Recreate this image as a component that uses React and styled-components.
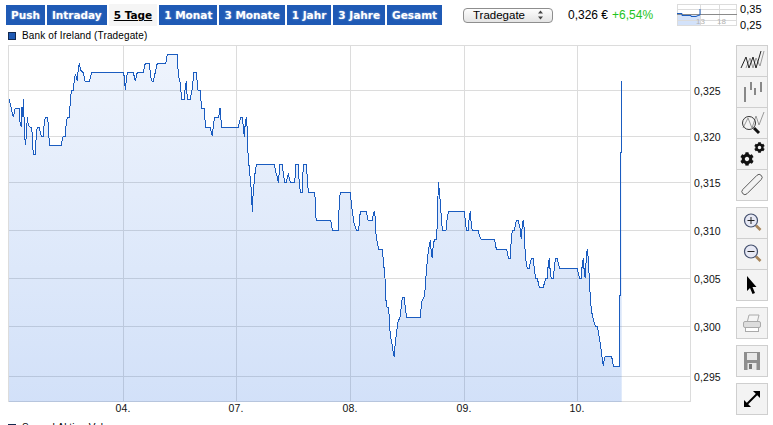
import styled, { createGlobalStyle } from "styled-components";
import { FaCog } from "react-icons/fa";

const GlobalStyle = createGlobalStyle`
  html, body {
    margin: 0;
    padding: 0;
    background: #fff;
    overflow: hidden;
  }
`;

const ranges = ["Push", "Intraday", "5 Tage", "1 Monat", "3 Monate", "1 Jahr", "3 Jahre", "Gesamt"];

const yGrid = [
  [90, "0,325"],
  [136, "0,320"],
  [182, "0,315"],
  [230, "0,310"],
  [278, "0,305"],
  [326, "0,300"],
  [376, "0,295"],
];

const xGrid = [
  [123, "04."],
  [236, "07."],
  [350, "08."],
  [464, "09."],
  [577, "10."],
];

// kurs trace, read off in 3x crops: [origin x, origin y, x y x y ...]
const traceParts = [
  [0, 40, [27,178, 33,200, 36,215, 40,232, 45,206, 58,206, 60,245, 64,262, 66,200, 68,230, 70,178, 74,280, 76,316, 79,290, 82,232, 85,255, 90,262, 94,262, 97,283, 98,323, 101,343, 106,343, 109,283, 112,262, 118,262, 122,283, 124,289, 130,289, 133,247, 136,232, 142,232, 145,253, 147,295, 149,316, 184,316, 187,298, 190,289, 196,289, 199,247, 202,232, 208,232, 209,212, 212,172, 214,151, 220,151, 224,110, 227,105, 232,124, 235,85, 238,70, 242,90, 250,98, 255,124, 268,124, 275,97, 370,97, 373,110, 376,150, 380,110, 383,97, 400,97, 406,124, 412,97, 430,97, 436,70, 448,70, 452,110, 456,124, 460,124, 466,97, 472,70, 497,70, 502,43, 532,43, 535,105, 540,125, 545,178, 553,178, 556,138, 559,124, 562,178, 571,178, 576,150, 582,97, 589,97, 594,150, 600,150, 605,205, 612,205, 617,262, 630,262, 637,288, 641,245, 645,232, 656,232, 660,205, 665,262]],
  [220, 90, [55,112, 60,90, 62,82, 67,82, 70,110, 73,140, 76,97, 79,82, 82,118, 84,190, 88,237, 91,265, 94,300, 97,365, 100,300, 104,265, 106,237, 110,223, 163,223, 167,245, 172,262, 175,278, 180,223, 187,223, 190,250, 194,278, 199,278, 205,250, 211,278, 224,278, 228,223, 235,223, 238,285, 242,307, 247,307, 250,223, 259,223, 262,265, 265,307]],
  [300, 180, [25,37, 43,37, 46,57, 46,98, 49,121, 92,121, 94,130, 97,151, 115,151, 118,67, 121,37]],
  [340, 170, [31,67, 35,110, 38,130, 42,160, 47,175, 50,181, 56,181, 59,138, 62,124, 79,124, 84,150, 97,150, 100,133, 103,124, 106,145, 107,185, 112,218, 116,238, 127,238, 131,282, 135,325, 137,385, 141,412, 146,412, 149,475, 153,508, 157,525, 160,550, 163,560, 166,515, 170,485, 174,455, 181,440, 185,395, 188,382, 193,382, 197,425, 200,441, 241,441, 245,395, 252,382, 255,360, 258,318, 261,282, 264,252, 267,232, 271,210, 274,250, 277,265, 280,222, 284,207, 289,207, 292,165, 294,80, 295,37, 298,60, 301,100, 304,140, 307,181, 318,181, 322,140, 326,124, 373,124, 377,165, 380,181, 385,181, 388,138, 391,124, 394,165, 397,181, 415,181, 418,195, 422,207]],
  [480, 200, [44,118, 47,140, 50,148, 80,148, 83,165, 86,175, 91,175, 94,115, 97,92, 103,92, 106,75, 109,62, 115,62, 120,85, 124,118, 127,76, 130,60, 133,90, 135,148, 138,182, 142,205, 148,205, 152,182, 155,175, 160,175, 164,218, 167,235, 172,235, 178,262, 190,262, 194,245, 198,235, 202,235, 205,190, 208,175, 211,218, 214,235, 220,235, 224,190, 227,175, 232,175, 236,195, 239,205, 292,205, 296,225, 299,235, 304,235, 307,190, 310,175, 313,218, 316,235, 319,170, 322,148, 325,178, 328,235, 330,275, 334,330, 338,350, 342,365, 346,378, 352,378, 356,403, 360,425, 364,455, 367,478, 370,498, 373,478, 376,469, 394,469, 397,478, 400,498, 418,498, 418,285, 421,285, 421,-144, 424,-144, 424,-357]],
];

const tracePoints = traceParts
  .flatMap(([ox, oy, v]) => {
    const out = [];
    for (let i = 0; i < v.length; i += 2) {
      out.push(`${(ox + v[i] / 3).toFixed(1)},${(oy + v[i + 1] / 3).toFixed(1)}`);
    }
    return out;
  })
  .join(" ");

function Chart() {
  return (
    <ChartSvg viewBox="8 45 728 372">
      <defs>
        <linearGradient id="area" x1="0" y1="45" x2="0" y2="402" gradientUnits="userSpaceOnUse">
          <stop offset="0" stopColor="#2a6fe0" stopOpacity="0.075" />
          <stop offset="1" stopColor="#2a6fe0" stopOpacity="0.21" />
        </linearGradient>
      </defs>
      <rect x="8.5" y="45.5" width="682" height="356" fill="#fff" stroke="#dcdcdc" />
      {yGrid.map(([y]) => (
        <line key={y} x1="9" x2="690" y1={y + 0.5} y2={y + 0.5} stroke="#dcdcdc" />
      ))}
      {xGrid.map(([x]) => (
        <line key={x} x1={x + 0.5} x2={x + 0.5} y1="46" y2="401" stroke="#dcdcdc" />
      ))}
      <polygon points={`9,402 ${tracePoints} 621.7,295 621.7,402`} fill="url(#area)" />
      <polyline points={tracePoints} fill="none" stroke="#1a5cc0" strokeWidth="1" shapeRendering="crispEdges" />
      {yGrid.map(([y, label]) => (
        <AxisText key={label} x="694" y={y + 5}>{label}</AxisText>
      ))}
      {xGrid.map(([x, label]) => (
        <AxisText key={label} x={x} y="412" textAnchor="middle">{label}</AxisText>
      ))}
    </ChartSvg>
  );
}

function MiniChart() {
  return (
    <MiniSvg viewBox="0 0 60 22">
      <rect x="0" y="10" width="23" height="12" fill="#d3e2fa" />
      <g stroke="#dcdcdc" fill="none">
        <rect x="0.5" y="0.5" width="59" height="21" />
        <line x1="0" x2="60" y1="5.5" y2="5.5" />
        <line x1="0" x2="60" y1="16.5" y2="16.5" />
        <line x1="23.5" x2="23.5" y1="0" y2="22" />
        <line x1="42.5" x2="42.5" y1="0" y2="22" />
      </g>
      <line x1="0" x2="60" y1="10.5" y2="10.5" stroke="#8a8a8a" />
      <polyline points="0,9.5 5,9.5 5,11.5 14,11.5 14,12.5 19,12.5 21,11.5 23,11 23,5" fill="none" stroke="#1a5cc0" />
      <MiniText x="19" y="20">13</MiniText>
      <MiniText x="40" y="20">18</MiniText>
    </MiniSvg>
  );
}

const LineIcon = () => (
  <svg width="30" height="30" viewBox="0 0 30 30" fill="none">
    <polyline points="9,22 13,12 16,22 19,12 23,20 27,5" stroke="#999" />
    <polyline points="4,22 9,11 12,22 16,11 19,22 24,5" stroke="#222" />
  </svg>
);

const BarsIcon = () => (
  <svg width="30" height="30" viewBox="0 0 30 30" stroke="#888" strokeWidth="2">
    <line x1="8" x2="8" y1="10" y2="25" />
    <line x1="14" x2="14" y1="5" y2="13" />
    <line x1="18" x2="18" y1="11" y2="18" />
    <line x1="24" x2="24" y1="5" y2="15" />
  </svg>
);

const ZoomChartIcon = () => (
  <svg width="30" height="30" viewBox="0 0 30 30" fill="none">
    <polyline points="6,20 11,10 15,20 19,8 22,17 27,4" stroke="#999" />
    <circle cx="12" cy="15" r="6.5" stroke="#333" />
    <line x1="17" x2="22" y1="20" y2="25" stroke="#111" strokeWidth="3" />
  </svg>
);

const LinkIcon = () => (
  <svg width="30" height="30" viewBox="0 0 30 30" fill="none">
    <rect x="2" y="11.5" width="26" height="6" rx="3" transform="rotate(-45 15 14.5)" stroke="#555" strokeWidth="0.9" />
  </svg>
);

const LensIcon = ({ plus }) => (
  <svg width="30" height="30" viewBox="0 0 30 30" fill="none">
    <circle cx="14" cy="12.5" r="6.5" fill="#e6e8f4" stroke="#44506e" strokeWidth="1.2" />
    <line x1="10.5" x2="17.5" y1="12.5" y2="12.5" stroke="#222" />
    {plus && <line x1="14" x2="14" y1="9" y2="16" stroke="#222" />}
    <line x1="19" x2="23.5" y1="17.5" y2="22" stroke="#a8865c" strokeWidth="2.6" />
  </svg>
);

const ArrowIcon = () => (
  <svg width="30" height="30" viewBox="0 0 30 30">
    <path d="M10 6 L10 21 L13 18 L15.5 24 L18 23 L15.5 17 L19.5 17 Z" fill="#000" />
  </svg>
);

const PrintIcon = () => (
  <svg width="30" height="30" viewBox="0 0 30 30" fill="none" stroke="#aaa">
    <path d="M10.5 13 L12 7 H22 L20.5 13" fill="#f5f5f5" />
    <rect x="6.5" y="13.5" width="17" height="6" rx="1.5" fill="#ddd" />
    <rect x="8.5" y="19.5" width="13" height="4" fill="#fff" />
  </svg>
);

const SaveIcon = () => (
  <svg width="30" height="30" viewBox="0 0 30 30">
    <path d="M7 6 H23 V24 H7 Z" fill="#8e8e8e" />
    <rect x="10" y="7" width="10" height="7" fill="#e8e8e8" />
    <rect x="10.5" y="17" width="9" height="7" fill="#e8e8e8" />
    <rect x="12" y="18" width="3" height="5" fill="#777" />
  </svg>
);

const ExpandIcon = () => (
  <svg width="30" height="30" viewBox="0 0 30 30" fill="#000">
    <line x1="10" x2="20" y1="20" y2="10" stroke="#000" strokeWidth="2" />
    <path d="M16 7 H23 V14 Z" />
    <path d="M7 16 V23 H14 Z" />
  </svg>
);

export default function App() {
  return (
    <Page>
      <GlobalStyle />
      <TopBar>
        <Tabs>
          {ranges.map((r) => (
            <Tab key={r} $active={r === "5 Tage"}>{r}</Tab>
          ))}
        </Tabs>
        <ExchangeSelect>
          Tradegate
          <SelectArrows viewBox="0 0 7 10">
            <path d="M3.5 0.5 L6 3.5 H1 Z M3.5 9.5 L6 6.5 H1 Z" fill="#444" />
          </SelectArrows>
        </ExchangeSelect>
        <Price>0,326 €</Price>
        <Change>+6,54%</Change>
        <MiniChart />
        <MiniScale>
          <span>0,35</span>
          <span>0,25</span>
        </MiniScale>
      </TopBar>
      <Legend>
        <LegendBox />
        Bank of Ireland (Tradegate)
      </Legend>
      <Main>
        <Chart />
        <Toolbar>
          <ToolGroup>
            <ToolButton><LineIcon /></ToolButton>
            <ToolButton><BarsIcon /></ToolButton>
            <ToolButton><ZoomChartIcon /></ToolButton>
            <ToolButton>
              <Gears>
                <FaCog size={11} />
                <FaCog size={14} />
              </Gears>
            </ToolButton>
            <ToolButton><LinkIcon /></ToolButton>
          </ToolGroup>
          <ToolGroup>
            <ToolButton><LensIcon plus /></ToolButton>
            <ToolButton><LensIcon /></ToolButton>
            <ToolButton><ArrowIcon /></ToolButton>
          </ToolGroup>
          <ToolGroup>
            <ToolButton><PrintIcon /></ToolButton>
          </ToolGroup>
          <ToolGroup>
            <ToolButton><SaveIcon /></ToolButton>
          </ToolGroup>
          <ToolGroup>
            <ToolButton><ExpandIcon /></ToolButton>
          </ToolGroup>
        </Toolbar>
      </Main>
      <Legend>
        <LegendBox $dark />
        Spread Aktien Volumen
      </Legend>
    </Page>
  );
}

// Styled Components
const Page = styled.div`
  width: 773px;
  height: 425px;
  overflow: hidden;
  font-family: "Liberation Sans", Arial, sans-serif;
  color: #000;
`;

const TopBar = styled.div`
  display: flex;
  align-items: center;
  height: 22px;
  padding: 4px 0 2px 6px;
`;

const Tabs = styled.div`
  flex: none;
  display: flex;
  align-items: center;
  gap: 2px;
  width: 440px;
  margin-right: 17px;
`;

const Tab = styled.div`
  flex: none;
  height: ${(props) => (props.$active ? "22px" : "20px")};
  line-height: ${(props) => (props.$active ? "22px" : "20px")};
  padding: 0 5px;
  font-family: "DejaVu Sans", Verdana, sans-serif;
  font-size: 10.5px;
  font-weight: bold;
  color: ${(props) => (props.$active ? "#000" : "#fff")};
  background: ${(props) => (props.$active ? "#f5f5f5" : "#1f5ab5")};
  text-decoration: ${(props) => (props.$active ? "underline" : "none")};
  text-shadow: ${(props) => (props.$active ? "none" : "0 0 2px rgba(255, 255, 255, 0.5)")};
`;

const ExchangeSelect = styled.div`
  flex: none;
  display: flex;
  align-items: center;
  justify-content: space-between;
  box-sizing: border-box;
  width: 90px;
  height: 15px;
  padding: 0 8px 0 9px;
  border: 1px solid #8e8e8e;
  border-radius: 4px;
  background: linear-gradient(#fdfdfd, #e4e4e4);
  font-size: 11.5px;
`;

const SelectArrows = styled.svg`
  width: 7px;
  height: 10px;
`;

const Price = styled.span`
  margin-left: 15px;
  font-size: 12px;
`;

const Change = styled.span`
  margin-left: 4px;
  font-size: 12px;
  color: #22c422;
`;

const MiniSvg = styled.svg`
  flex: none;
  width: 60px;
  height: 22px;
  margin-left: 24px;
`;

const MiniText = styled.text`
  font-family: "Liberation Sans", Arial, sans-serif;
  font-size: 8px;
  fill: #b4b4b4;
`;

const MiniScale = styled.div`
  display: flex;
  flex-direction: column;
  justify-content: space-between;
  height: 28px;
  margin-top: 4px;
  margin-left: 3px;
  font-size: 11px;
  line-height: 12px;
`;

const Legend = styled.div`
  display: flex;
  align-items: center;
  gap: 6px;
  height: 15px;
  padding-left: 8px;
  font-size: 10px;
  letter-spacing: 0.13px;
`;

const LegendBox = styled.span`
  box-sizing: border-box;
  width: 8px;
  height: 8px;
  border: 1px solid #13294f;
  background: ${(props) => (props.$dark ? "#555" : "#1f5ab5")};
`;

const Main = styled.div`
  display: flex;
  align-items: flex-start;
  height: 375px;
  padding-top: 2px;
  padding-left: 8px;
`;

const ChartSvg = styled.svg`
  flex: none;
  width: 728px;
  height: 372px;
`;

const AxisText = styled.text`
  font-family: "Liberation Sans", Arial, sans-serif;
  font-size: 10.5px;
  letter-spacing: 0.1px;
  fill: #111;
`;

const Toolbar = styled.div`
  flex: none;
  display: flex;
  flex-direction: column;
  gap: 6px;
  width: 32px;
`;

const ToolGroup = styled.div`
  display: flex;
  flex-direction: column;
`;

const ToolButton = styled.div`
  box-sizing: border-box;
  display: flex;
  align-items: center;
  justify-content: center;
  width: 32px;
  height: 32px;
  border: 1px solid #cfcfcf;
  background: #f3f3f3;
  & + & {
    margin-top: -1px;
  }
`;

const Gears = styled.div`
  display: flex;
  flex-direction: row-reverse;
  align-items: flex-start;
  width: 25px;
  height: 24px;
  color: #111;
  svg:first-child {
    margin-top: 0;
  }
  svg:last-child {
    margin-top: 10px;
  }
`;
